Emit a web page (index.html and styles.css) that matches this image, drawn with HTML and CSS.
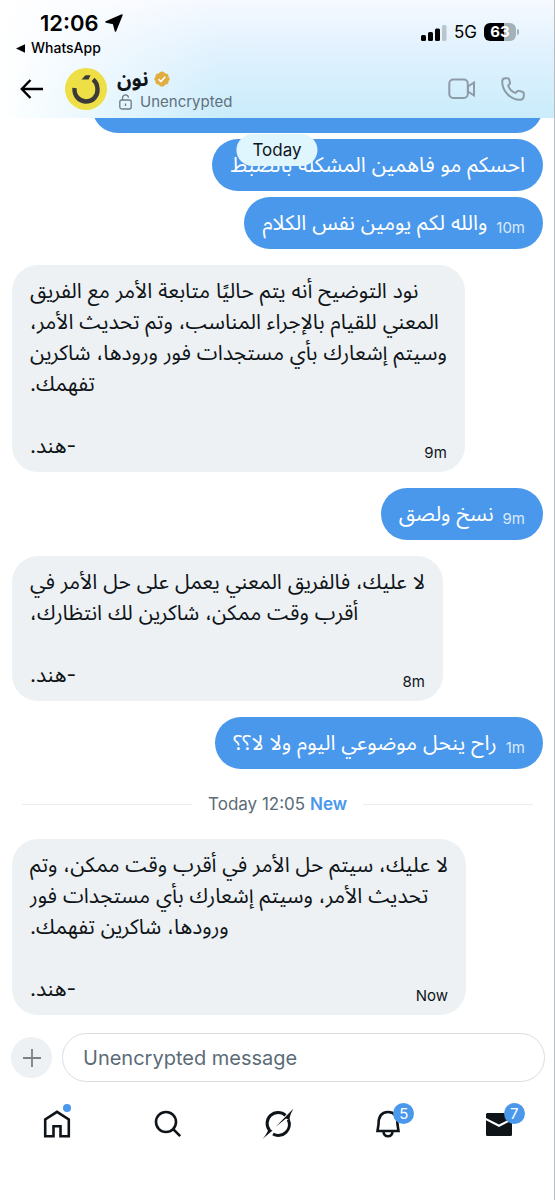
FILE: index.html
```html
<!DOCTYPE html>
<html lang="en">
<head>
  <meta charset="UTF-8">
  <meta name="viewport" content="width=device-width, initial-scale=1">
  <title>نون</title>
  <link rel="stylesheet" href="styles.css">
</head>
<body>
  <div class="app">
    <header class="header">
      <div class="status">
        <div class="status-left">
          <div class="clock">12:06
            <svg width="18" height="18" viewBox="0 0 18 18"><path d="M17 1 10.5 17 8.5 9.5 1 8Z" fill="#000" stroke="#000" stroke-width="1.5" stroke-linejoin="round"/></svg>
          </div>
          <a class="return" href="#">
            <svg width="9" height="9" viewBox="0 0 9 9"><path d="M0 4.5 9 .3v8.4z"/></svg>
            WhatsApp
          </a>
        </div>
        <div class="status-right">
          <svg width="26" height="17" viewBox="0 0 26 17">
            <rect x="0" y="11" width="5" height="6" rx="1.5"/>
            <rect x="7" y="8" width="5" height="9" rx="1.5"/>
            <rect x="14" y="4.5" width="5" height="12.5" rx="1.5"/>
            <rect x="21" y="1" width="4.5" height="16" rx="1.5" fill="#b9c6cd"/>
          </svg>
          <span class="network">5G</span>
          <span class="battery">63</span>
        </div>
      </div>

      <div class="contact">
        <button class="icon-btn" aria-label="Back">
          <svg width="24" height="20" viewBox="0 0 24 20" fill="none" stroke="#000" stroke-width="2.4"><path d="M10.5 1 1.8 10l8.7 9M2 10h21"/></svg>
        </button>
        <svg class="avatar" width="42" height="42" viewBox="0 0 42 42">
          <circle cx="21" cy="21" r="21" fill="#eddf45"/>
          <path d="M9.500 20C9 28 14 33 20.500 33.500C28 33.500 33 28 32.500 21C32.300 17 30.500 13.500 28 11.500" fill="none" stroke="#3b3a38" stroke-width="4.4"/>
          <path d="M16.500 11.500 20.500 7.200h5L23.500 11.500z" fill="#3b3a38"/>
        </svg>
        <div class="who">
          <h1 class="name"><span lang="ar" dir="rtl">نون</span>
            <svg width="18" height="18" viewBox="0 0 22 22"><path fill="#dfae3e" d="M20.400 11c0-1.100-.7-2.100-1.700-2.700.4-1.100.2-2.300-.6-3.100-.8-.9-2-1.200-3.100-.8C14.400 3.300 13.300 1.800 11 1.800S7.600 3.300 7 4.400c-1.100-.4-2.300-.1-3.100.8-.8.8-1 2-.6 3.100-1 .6-1.700 1.600-1.700 2.700s.7 2.100 1.700 2.700c-.4 1.100-.2 2.300.6 3.100.8.9 2 1.200 3.100.8.6 1.100 1.700 2.600 4 2.600s3.400-1.500 4-2.600c1.100.4 2.300.1 3.100-.8.8-.8 1-2 .6-3.100 1-.6 1.700-1.600 1.700-2.700z"/><path d="m6.800 11.300 2.800 2.800 5.400-5.900" fill="none" stroke="#fff" stroke-width="2"/></svg>
          </h1>
          <p class="state">
            <svg width="13" height="16" viewBox="0 0 13 16" fill="none" stroke="#6b7c88" stroke-width="1.3"><rect x=".8" y="6" width="11.4" height="9" rx="2"/><path d="M3.500 6V4.200C3.500 2 4.800.9 6.500.9S9.300 2 9.500 3.700M6.500 9.500v2.500"/></svg>
            Unencrypted
          </p>
        </div>
        <div class="calls">
          <button class="icon-btn" aria-label="Video call">
            <svg width="28" height="22" viewBox="0 0 28 22" fill="none" stroke="#8d9ba7" stroke-width="2"><rect x="1.300" y="1.500" width="18.5" height="18.5" rx="4"/><path d="M20 8.500 26 4.500v13L20 13.500z"/></svg>
          </button>
          <button class="icon-btn" aria-label="Call">
            <svg width="24" height="24" viewBox="0 0 24 24" fill="none" stroke="#8d9ba7" stroke-width="2" stroke-linejoin="round"><path d="M1.200 4.500C1.200 2.200 2.500 1.200 4.500 1.200h2c1 0 1.600.5 1.800 1.400l.6 3c.2.800 0 1.300-.6 1.800L7.200 8.500c1 3 4.200 6.300 7.300 7.400l1.600-1.500c.6-.5 1.200-.7 1.900-.5l3.200.8c1 .3 1.600.9 1.600 1.800v2c0 2.500-1.500 4.300-4 4.300C9.500 22.800 1.200 14 1.200 4.500z"/></svg>
          </button>
        </div>
      </div>
    </header>

    <main class="chat">
      <div class="day">Today</div>
      <div class="msg sent cut"></div>
      <div class="msg sent grouped"><p class="text" lang="ar" dir="rtl">احسكم مو فاهمين المشكلة بالضبط</p></div>
      <div class="msg sent grouped"><p class="text" lang="ar" dir="rtl">والله لكم يومين نفس الكلام</p><time>10m</time></div>

      <div class="msg received">
        <p class="text" lang="ar" dir="rtl">نود التوضيح أنه يتم حاليًا متابعة الأمر مع الفريق<br>المعني للقيام بالإجراء المناسب، وتم تحديث الأمر،<br>وسيتم إشعارك بأي مستجدات فور ورودها، شاكرين<br>تفهمك.<br><br>-هند.</p>
        <time>9m</time>
      </div>

      <div class="msg sent"><p class="text" lang="ar" dir="rtl">نسخ ولصق</p><time>9m</time></div>

      <div class="msg received">
        <p class="text" lang="ar" dir="rtl">لا عليك، فالفريق المعني يعمل على حل الأمر في<br>أقرب وقت ممكن، شاكرين لك انتظارك،<br><br>-هند.</p>
        <time>8m</time>
      </div>

      <div class="msg sent"><p class="text" lang="ar" dir="rtl">راح ينحل موضوعي اليوم ولا لا؟؟</p><time>1m</time></div>

      <div class="divider"><span>Today 12:05 <b>New</b></span></div>

      <div class="msg received">
        <p class="text" lang="ar" dir="rtl">لا عليك، سيتم حل الأمر في أقرب وقت ممكن، وتم<br>تحديث الأمر، وسيتم إشعارك بأي مستجدات فور<br>ورودها، شاكرين تفهمك.<br><br>-هند.</p>
        <time>Now</time>
      </div>
    </main>

    <form class="composer">
      <button class="add" type="button" aria-label="Add attachment">
        <svg width="18" height="18" viewBox="0 0 18 18" stroke="#7d8183" stroke-width="1.8"><path d="M9 0v18M0 9h18"/></svg>
      </button>
      <input class="field" type="text" placeholder="Unencrypted message" aria-label="Unencrypted message">
    </form>

    <nav class="tabs">
      <a href="#" aria-label="Home">
        <svg width="28" height="28" viewBox="0 0 28 28" fill="none" stroke="#0f1419" stroke-width="2.6"><path d="M2.200 26.300V9.500L14 1.900l11.800 7.600v16.800h-8.300v-10h-7v10z"/></svg>
        <i class="dot"></i>
      </a>
      <a href="#" aria-label="Search">
        <svg width="28" height="28" viewBox="0 0 28 28" fill="none" stroke="#0f1419" stroke-width="2.6"><circle cx="12" cy="12" r="10"/><path d="m19.200 19.200 7 7"/></svg>
      </a>
      <a href="#" aria-label="Grok">
        <svg width="34" height="32" viewBox="0 0 34 32"><g fill="none" stroke="#0f1419" stroke-width="3"><path d="M24.500 7.300A11 11 0 0 0 8.500 22.300"/><path d="M27.200 11.500A11 11 0 0 1 12 26"/></g><path fill="#0f1419" d="M32.500.5 14.500 19 25 10.500 28.500 12C28.500 8 30.500 4 32.500.5zM1.500 31 11.500 22.500 7.500 20.500C6.800 24 4.500 27.500 1.500 31z"/></svg>
      </a>
      <a href="#" aria-label="Notifications">
        <svg width="28" height="28" viewBox="0 0 28 28" fill="none" stroke="#0f1419" stroke-width="2.6"><path d="M4.500 14.500C4.500 6.500 7 2 14 2s9.500 4.500 9.500 12.500l1 6.500h-21zM9.500 21.500c0 3 2 4.700 4.500 4.700s4.500-1.700 4.500-4.700"/></svg>
        <span class="badge">5</span>
      </a>
      <a href="#" aria-label="Messages">
        <svg width="28" height="28" viewBox="0 0 28 28" fill="#0f1419"><path d="M1 8V4.500C1 3.500 1.800 3 2.600 3h22.800c.9 0 1.600.6 1.600 1.500V8l-13 6.500z"/><path d="M1 10.200 14 17l13-6.800v14.300c0 1-.7 1.500-1.600 1.500H2.600c-.9 0-1.600-.5-1.600-1.500z"/></svg>
        <span class="badge">7</span>
      </a>
    </nav>
  </div>
</body>
</html>
```

FILE: styles.css
```css
* {
  box-sizing: border-box;
}

body {
  margin: 0;
  font-family: Inter, "Noto Sans Arabic", "DejaVu Sans", sans-serif;
  color: #0f1419;
  background: #fff;
}

h1, p {
  margin: 0;
}

a {
  color: inherit;
  text-decoration: none;
}

svg {
  display: block;
  flex: none;
}

.app {
  display: flex;
  flex-direction: column;
  height: 100vh;
  border-right: 1px solid #b9bdc0;
}

/* header */
.header {
  flex: none;
  height: 118px;
  padding-top: 8px;
  background: linear-gradient(90deg, #fff 0%, rgba(255, 255, 255, 0) 40%), linear-gradient(#f6f9ff 0%, #e2f2fe 40%, #c9ecfb 100%);
}

.status {
  display: flex;
  justify-content: space-between;
  height: 52px;
  padding: 0 38px 0 16px;
  color: #000;
}

.clock {
  display: flex;
  align-items: center;
  gap: 6px;
  padding-left: 24px;
  font-size: 22px;
  font-weight: 600;
  line-height: 30px;
}

.return {
  display: flex;
  align-items: center;
  gap: 6px;
  font-size: 14px;
  font-weight: 500;
  line-height: 20px;
}

.status-right {
  display: flex;
  align-items: center;
  gap: 7px;
  height: 48px;
}

.network {
  font-size: 17px;
}

.battery {
  position: relative;
  width: 32px;
  border-radius: 6px;
  background: linear-gradient(90deg, #000 64%, #a3b2b9 64%);
  color: #fff;
  font-size: 15px;
  font-weight: 700;
  line-height: 18px;
  text-align: center;
}

.battery::after {
  content: "";
  position: absolute;
  top: 6px;
  right: -3px;
  width: 2px;
  height: 6px;
  border-radius: 0 2px 2px 0;
  background: #a3b2b9;
}

.contact {
  display: flex;
  align-items: center;
  height: 58px;
  padding: 0 29px 0 20px;
}

.icon-btn {
  padding: 0;
  border: 0;
  background: none;
}

.avatar {
  margin: 0 10px 0 21px;
}

.name {
  display: flex;
  align-items: center;
  gap: 4px;
  padding-top: 2px;
  font-size: 20px;
  line-height: 24px;
}

.state {
  display: flex;
  align-items: center;
  gap: 8px;
  padding-left: 2px;
  color: #5f707c;
  font-size: 15px;
  line-height: 22px;
}

.calls {
  display: flex;
  align-items: center;
  gap: 25px;
  margin-left: auto;
}

/* messages */
.chat {
  position: relative;
  display: flex;
  flex: 1;
  flex-direction: column;
  justify-content: flex-end;
  min-height: 0;
  padding: 0 11px 18px 12px;
  overflow: hidden;
}

.day {
  position: absolute;
  top: 16px;
  left: 50%;
  z-index: 1;
  padding: 0 16px;
  border-radius: 16px;
  background: #dff6ff;
  font-size: 17px;
  line-height: 32px;
  transform: translateX(-50%);
}

.msg {
  flex: none;
  margin-top: 16px;
  border-radius: 26px;
}

.text {
  font-size: 21px;
  line-height: 31px;
  text-align: left;
  white-space: nowrap;
}

.msg time {
  font-size: 15px;
  line-height: 20px;
}

.sent {
  display: flex;
  align-items: flex-end;
  align-self: flex-end;
  gap: 9px;
  min-height: 52px;
  padding: 10px 18px 11px;
  background: #4a98eb;
  color: #fff;
}

.sent time {
  color: #dcebfb;
}

.grouped {
  margin-top: 6px;
}

.cut {
  width: 85%;
}

.received {
  display: grid;
  align-self: flex-start;
  max-width: 88%;
  padding: 10px 18px 11px;
  background: #edf1f3;
}

.received .text,
.received time {
  grid-area: 1 / 1;
}

.received time {
  place-self: end;
  line-height: 16px;
}

.divider {
  display: flex;
  align-items: center;
  gap: 16px;
  margin: 23px 10px 7px;
  color: #5b6b77;
  font-size: 17px;
  line-height: 24px;
}

.divider::before,
.divider::after {
  content: "";
  flex: 1;
  height: 1px;
  background: #e9edef;
}

.divider b {
  color: #4a98eb;
  font-weight: 600;
}

/* composer */
.composer {
  display: flex;
  flex: none;
  align-items: center;
  gap: 10px;
  padding: 0 9px 0 11px;
}

.add {
  display: grid;
  place-items: center;
  width: 41px;
  height: 41px;
  padding: 0;
  border: 0;
  border-radius: 50%;
  background: #edf1f3;
}

.field {
  flex: 1;
  min-width: 0;
  height: 49px;
  padding: 0 20px;
  border: 1px solid #d8dee2;
  border-radius: 25px;
  background: #fff;
  font: inherit;
  font-size: 20px;
}

.field::placeholder {
  color: #5b6b77;
  opacity: 1;
}

/* bottom tabs */
.tabs {
  display: grid;
  flex: none;
  grid-template-columns: repeat(5, 1fr);
  height: 118px;
  padding: 25px 0 0 2px;
}

.tabs a {
  position: relative;
  display: grid;
  place-items: center;
  height: 34px;
}

.dot,
.badge {
  position: absolute;
  top: -3px;
  left: 50%;
  border-radius: 50%;
  background: #4a98eb;
}

.dot {
  width: 8px;
  height: 8px;
  margin-left: 6px;
}

.badge {
  top: -4px;
  width: 21px;
  height: 21px;
  margin-left: 5px;
  color: #fff;
  font-size: 15px;
  line-height: 21px;
  text-align: center;
}
```
